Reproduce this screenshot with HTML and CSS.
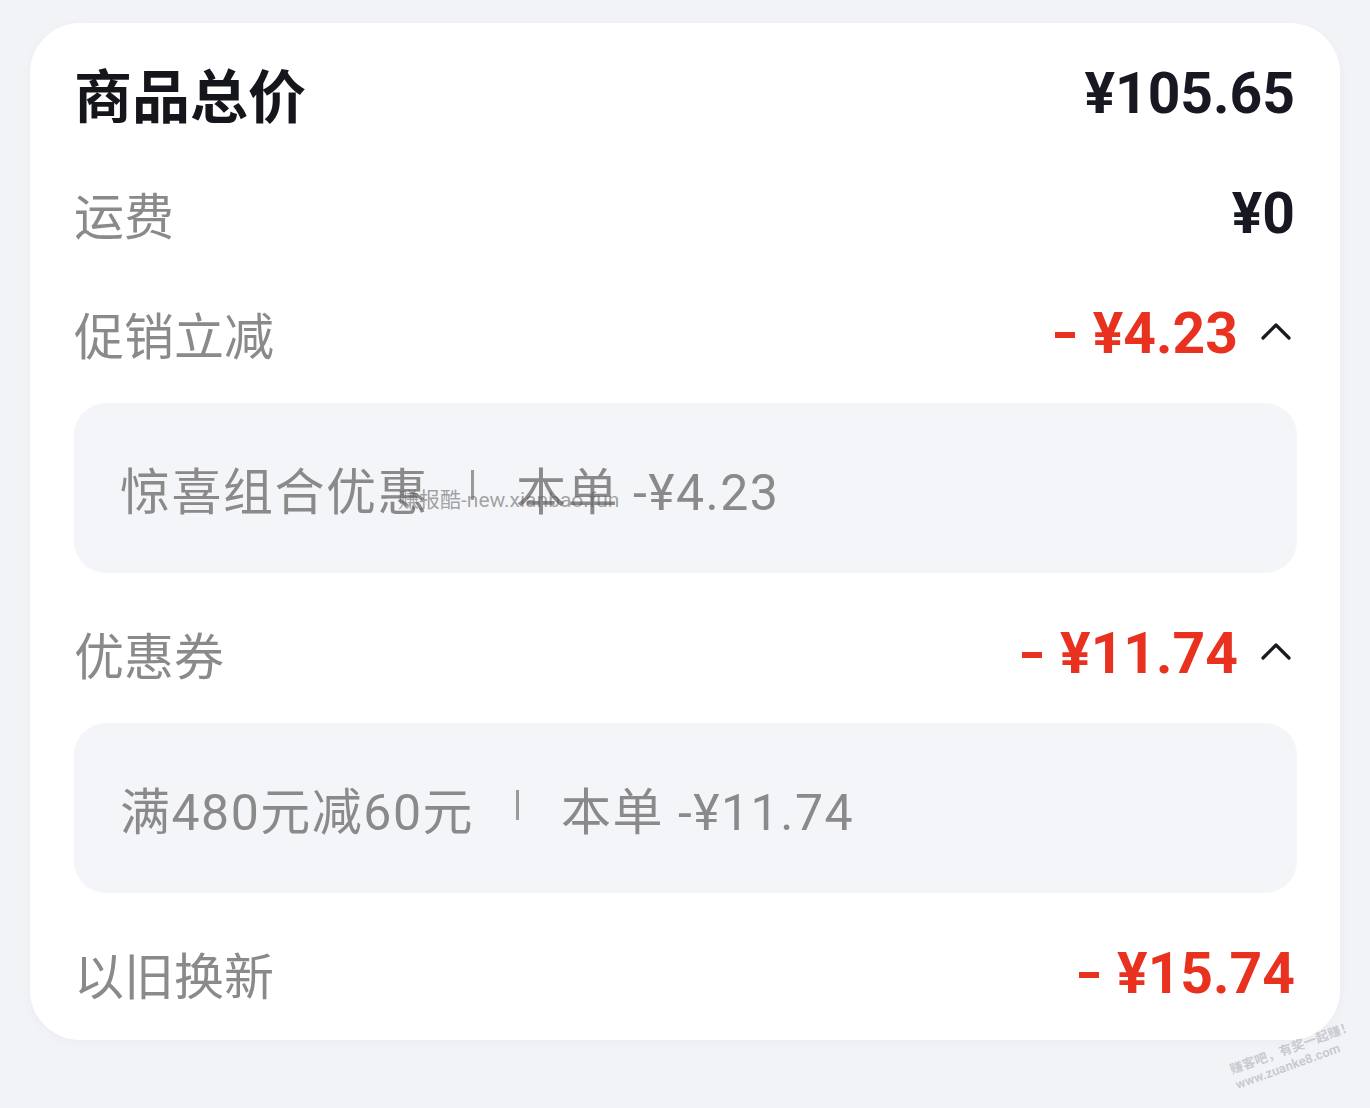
FILE: index.html
```html
<!DOCTYPE html>
<html>
<head>
	<meta charset="utf-8">
	<title>订单金额</title>
	<link rel="stylesheet" href="styles.css">
</head>
<body>
<div class="page">
	<div class="card">
		<div class="row">
			<span class="title">商品总价</span>
			<span class="amount">¥105.65</span>
		</div>
		<div class="row">
			<span class="label">运费</span>
			<span class="amount">¥0</span>
		</div>
		<div class="row">
			<span class="label">促销立减</span>
			<span class="amount red"><span class="minus"></span>¥4.23<span class="chevron"><svg width="32" height="20" viewBox="0 0 32 20"><path d="M3 17 L16 4 L29 17" fill="none" stroke="#1a1a22" stroke-width="3.2" stroke-linecap="round" stroke-linejoin="round"/></svg></span></span>
		</div>
		<div class="detail">
			<span>惊喜组合优惠</span><span class="sep"></span><span>本单 -¥4.23</span>
			<span class="wm">赚报酷-new.xianbao.fun</span>
		</div>
		<div class="row">
			<span class="label">优惠券</span>
			<span class="amount red"><span class="minus"></span>¥11.74<span class="chevron"><svg width="32" height="20" viewBox="0 0 32 20"><path d="M3 17 L16 4 L29 17" fill="none" stroke="#1a1a22" stroke-width="3.2" stroke-linecap="round" stroke-linejoin="round"/></svg></span></span>
		</div>
		<div class="detail">
			<span>满480元减60元</span><span class="sep"></span><span>本单 -¥11.74</span>
		</div>
		<div class="row">
			<span class="label">以旧换新</span>
			<span class="amount red"><span class="minus"></span>¥15.74</span>
		</div>
	</div>
	<div class="stamp">赚客吧，有奖一起赚！<br>www.zuanke8.com</div>
</div>
</body>
</html>
```

FILE: styles.css
```css
body {
    margin: 0;
    background-color: #f2f3f7;
    font-family: Roboto, "Noto Sans CJK SC", sans-serif;
}

.page {
    position: relative;
    height: 1108px;
    padding: 23px 30px 0 30px;
    box-sizing: border-box;
}

.card {
    background-color: #fff;
    border-radius: 50px;
    padding: 10px 45px 7px 46px;
    box-shadow: 0 2px 12px rgba(0, 0, 0, 0.03);
}

.row {
    height: 120px;
    display: flex;
    align-items: center;
    justify-content: space-between;
}

.title {
    font-size: 58px;
    font-weight: 700;
    color: #15151c;
    margin-left: -2px;
}

.label {
    font-size: 50px;
    color: #8a8a8a;
    margin-left: -2px;
}

.amount {
    display: flex;
    align-items: center;
    font-size: 57px;
    font-weight: 700;
    color: #181822;
}

.amount.red {
    color: #e8311f;
}

.minus {
    display: inline-block;
    width: 20px;
    height: 6px;
    background-color: #e8311f;
    margin-right: 18px;
    margin-top: 4px;
}

.chevron {
    display: flex;
    margin-left: 22px;
    margin-right: 3px;
    margin-top: -4px;
}

.detail {
    position: relative;
    display: flex;
    align-items: center;
    height: 170px;
    margin: 10px -2px 20px -2px;
    padding-left: 46px;
    background-color: #f4f5f9;
    border-radius: 32px;
    font-size: 50px;
    color: #8a8a8a;
    letter-spacing: 1.5px;
}

.sep {
    display: inline-block;
    width: 3px;
    height: 30px;
    background-color: #9a9a9a;
    margin: 0 42px 6px 42px;
}

.wm {
    position: absolute;
    left: 324px;
    top: 80px;
    font-size: 21px;
    letter-spacing: 0;
    color: rgba(90, 90, 90, 0.55);
}

.stamp {
    position: absolute;
    left: 1228px;
    top: 1063px;
    font-size: 13px;
    line-height: 16px;
    font-weight: 700;
    color: rgba(150, 150, 160, 0.45);
    transform: rotate(-20deg);
    transform-origin: left top;
    white-space: nowrap;
}
```
